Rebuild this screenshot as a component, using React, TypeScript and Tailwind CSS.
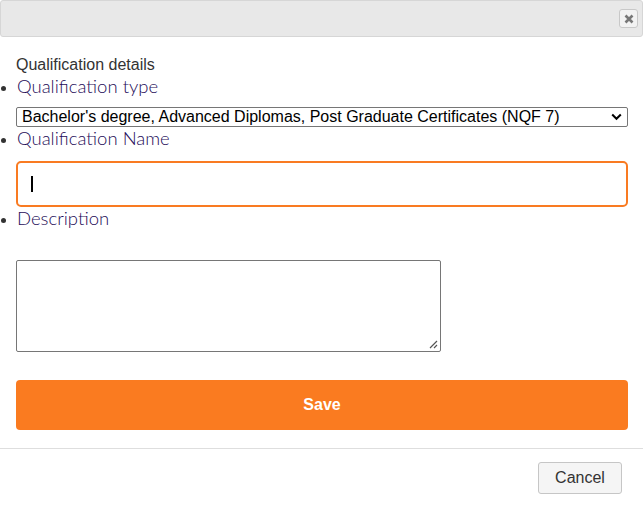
import React from "react";

export default function App() {
  return (
    <div className="w-[643px] h-[519px] bg-white relative overflow-hidden" style={{ fontFamily: '"Liberation Sans", Arial, sans-serif' }}>
      <div className="h-[37px] bg-[#e8e8e8] border border-[#d6d6d6] rounded-[3px] flex items-center justify-end pr-[4px]">
        <button className="w-[19px] h-[19px] bg-[#f2f2f2] border border-[#c8c8c8] rounded-[3px] flex items-center justify-center">
          <svg width="10" height="10" viewBox="0 0 10 10">
            <path d="M1.5 1.5 L8.5 8.5 M8.5 1.5 L1.5 8.5" stroke="#777" strokeWidth="2.6" strokeLinecap="butt" />
          </svg>
        </button>
      </div>
      <div className="px-[16px]">
        <div className="mt-[18px] text-[16px] leading-[20px] text-[#333]">Qualification details</div>
      </div>
      <ul className="list-disc pl-[17px] pr-[15px] text-[#1e0c58] text-[18.5px] leading-[22px] marker:text-[#333] marker:text-[14px]" style={{ fontFamily: 'Lato, "Noto Sans", sans-serif', fontWeight: 300 }}>
        <li>
          <span>Qualification type</span>
          <div className="ml-[-1px] mt-[10px] h-[20px] border border-[#767676] rounded-[2px] relative flex items-center pl-[5px] text-black text-[16px]" style={{ fontFamily: '"Liberation Sans", Arial, sans-serif', fontWeight: 400 }}>
            <span className="leading-[18px]">Bachelor's degree, Advanced Diplomas, Post Graduate Certificates (NQF 7)</span>
            <svg className="absolute right-[5px] top-[5px]" width="11" height="8" viewBox="0 0 11 8">
              <path d="M1.2 1.5 L5.5 5.8 L9.8 1.5" stroke="#000" strokeWidth="2" fill="none" />
            </svg>
          </div>
        </li>
        <li>
          <span>Qualification Name</span>
          <div className="ml-[-1px] mt-[12px] h-[46px] border-2 border-[#f97b22] rounded-[5px] flex items-center pl-[13px]">
            <div className="w-[2px] h-[16px] bg-black"></div>
          </div>
        </li>
        <li>
          <span>Description</span>
          <div className="ml-[-1px] mt-[31px] w-[425px] h-[92px] border border-[#767676] rounded-[2px] relative">
            <svg className="absolute right-[2px] bottom-[2px]" width="10" height="10" viewBox="0 0 10 10">
              <path d="M9 2 L2 9 M9 6 L6 9" stroke="#555" strokeWidth="1.2" />
            </svg>
          </div>
        </li>
      </ul>
      <div className="px-[16px] pr-[15px]">
        <button className="mt-[28px] w-full h-[50px] bg-[#fa7b20] rounded-[4px] text-white text-[16px] font-bold" style={{ fontFamily: '"Liberation Sans", Arial, sans-serif' }}>
          Save
        </button>
      </div>
      <div className="mt-[18px] border-t border-[#dedede]"></div>
      <div className="flex justify-end pr-[21px]">
        <button className="mt-[13px] w-[84px] h-[32px] bg-[#f5f5f5] border border-[#c6c6c6] rounded-[3px] text-[16px] text-[#333]">
          Cancel
        </button>
      </div>
    </div>
  );
}
